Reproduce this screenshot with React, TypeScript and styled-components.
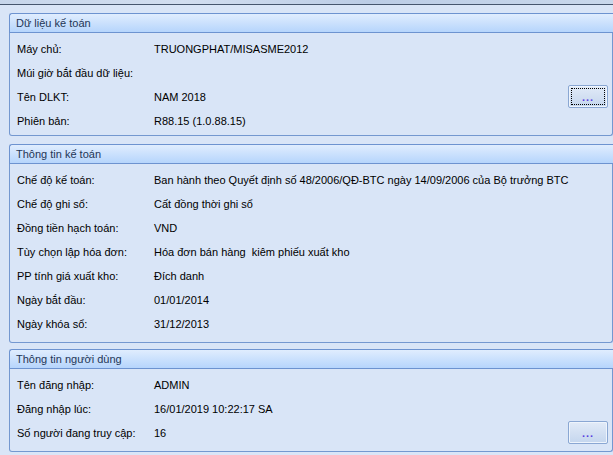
import React from "react";
import styled, { createGlobalStyle } from "styled-components";

const GlobalStyle = createGlobalStyle`
  html, body { margin: 0; padding: 0; background: #d9e5f7; }
  body { font-family: "Liberation Sans", Arial, sans-serif; font-size: 11px; color: #000; }
`;

const Page = styled.div`
  width: 613px;
  height: 455px;
  overflow: hidden;
  background: #d9e5f7;
  display: flex;
  flex-direction: column;
`;

const TopStrip = styled.div`
  height: 4px;
  flex: none;
  background: linear-gradient(90deg, #c7d6eb 0%, #d2def0 30%, #bccde6 60%, #c9d8ec 100%);
  border-bottom: 1px solid #46566e;
`;

const Stack = styled.div`
  display: flex;
  flex-direction: column;
  padding-top: 8px;
`;

const Panel = styled.section<{ $gap: number }>`
  margin-left: 9px;
  margin-top: ${(p) => p.$gap}px;
  width: 604px;
  display: flex;
  flex-direction: column;
`;

const PanelHeader = styled.div`
  height: 18px;
  margin-right: -20px;
  border: 1px solid #6d93d0;
  border-right: none;
  border-radius: 3px 0 0 0;
  background: linear-gradient(#e0edfe, #b6d5fc);
  padding-left: 6px;
  display: flex;
  align-items: center;
  color: #1f3656;
  font-size: 11px;
`;

const PanelBody = styled.div<{ $height: number }>`
  height: ${(p) => p.$height}px;
  box-sizing: border-box;
  border: 1px solid #7498d0;
  border-top: none;
  border-radius: 0 0 3px 3px;
  padding-top: 4px;
  display: flex;
  flex-direction: column;
`;

const Row = styled.div`
  height: 24px;
  display: flex;
  align-items: center;
  padding-left: 7px;
  padding-right: 4px;
`;

const Label = styled.span`
  width: 137px;
  flex: none;
  white-space: nowrap;
`;

const Value = styled.span`
  white-space: pre;
`;

const BrowseButton = styled.button<{ $focused?: boolean }>`
  position: relative;
  margin-left: auto;
  align-self: flex-start;
  width: 40px;
  height: 23px;
  padding: 1px 0 0;
  border: 1px solid #8aa7d3;
  border-radius: 2px;
  background: linear-gradient(#e2ebf8, #d3e0f2 50%, #c4d6ee);
  box-shadow: inset 0 0 0 1px #eef4fc;
  font-family: "Liberation Sans", Arial, sans-serif;
  font-size: 11px;
  font-weight: bold;
  color: #5b3fe0;
  letter-spacing: 1px;
  line-height: 21px;
  &::after {
    content: "";
    display: ${(p) => (p.$focused ? "block" : "none")};
    position: absolute;
    inset: 2px;
    border: 1px dotted #000;
  }
`;

type Item = { label: string; value?: string; button?: "focused" | "plain" };

const panels: { title: string; gap: number; height: number; rows: Item[] }[] = [
  {
    title: "Dữ liệu kế toán",
    gap: 0,
    height: 103,
    rows: [
      { label: "Máy chủ:", value: "TRUONGPHAT/MISASME2012" },
      { label: "Múi giờ bắt đầu dữ liệu:" },
      { label: "Tên DLKT:", value: "NAM 2018", button: "focused" },
      { label: "Phiên bản:", value: "R88.15 (1.0.88.15)" },
    ],
  },
  {
    title: "Thông tin kế toán",
    gap: 8,
    height: 179,
    rows: [
      { label: "Chế độ kế toán:", value: "Ban hành theo Quyết định số 48/2006/QĐ-BTC ngày 14/09/2006 của Bộ trưởng BTC" },
      { label: "Chế độ ghi sổ:", value: "Cất đồng thời ghi sổ" },
      { label: "Đồng tiền hạch toán:", value: "VND" },
      { label: "Tùy chọn lập hóa đơn:", value: "Hóa đơn bán hàng  kiêm phiếu xuất kho" },
      { label: "PP tính giá xuất kho:", value: "Đích danh" },
      { label: "Ngày bắt đầu:", value: "01/01/2014" },
      { label: "Ngày khóa sổ:", value: "31/12/2013" },
    ],
  },
  {
    title: "Thông tin người dùng",
    gap: 6,
    height: 83,
    rows: [
      { label: "Tên đăng nhập:", value: "ADMIN" },
      { label: "Đăng nhập lúc:", value: "16/01/2019 10:22:17 SA" },
      { label: "Số người đang truy cập:", value: "16", button: "plain" },
    ],
  },
];

export default function App() {
  return (
    <Page>
      <GlobalStyle />
      <TopStrip />
      <Stack>
        {panels.map((p) => (
          <Panel key={p.title} $gap={p.gap}>
            <PanelHeader>{p.title}</PanelHeader>
            <PanelBody $height={p.height}>
              {p.rows.map((r) => (
                <Row key={r.label}>
                  <Label>{r.label}</Label>
                  {r.value && <Value>{r.value}</Value>}
                  {r.button && (
                    <BrowseButton $focused={r.button === "focused"}>...</BrowseButton>
                  )}
                </Row>
              ))}
            </PanelBody>
          </Panel>
        ))}
      </Stack>
    </Page>
  );
}
